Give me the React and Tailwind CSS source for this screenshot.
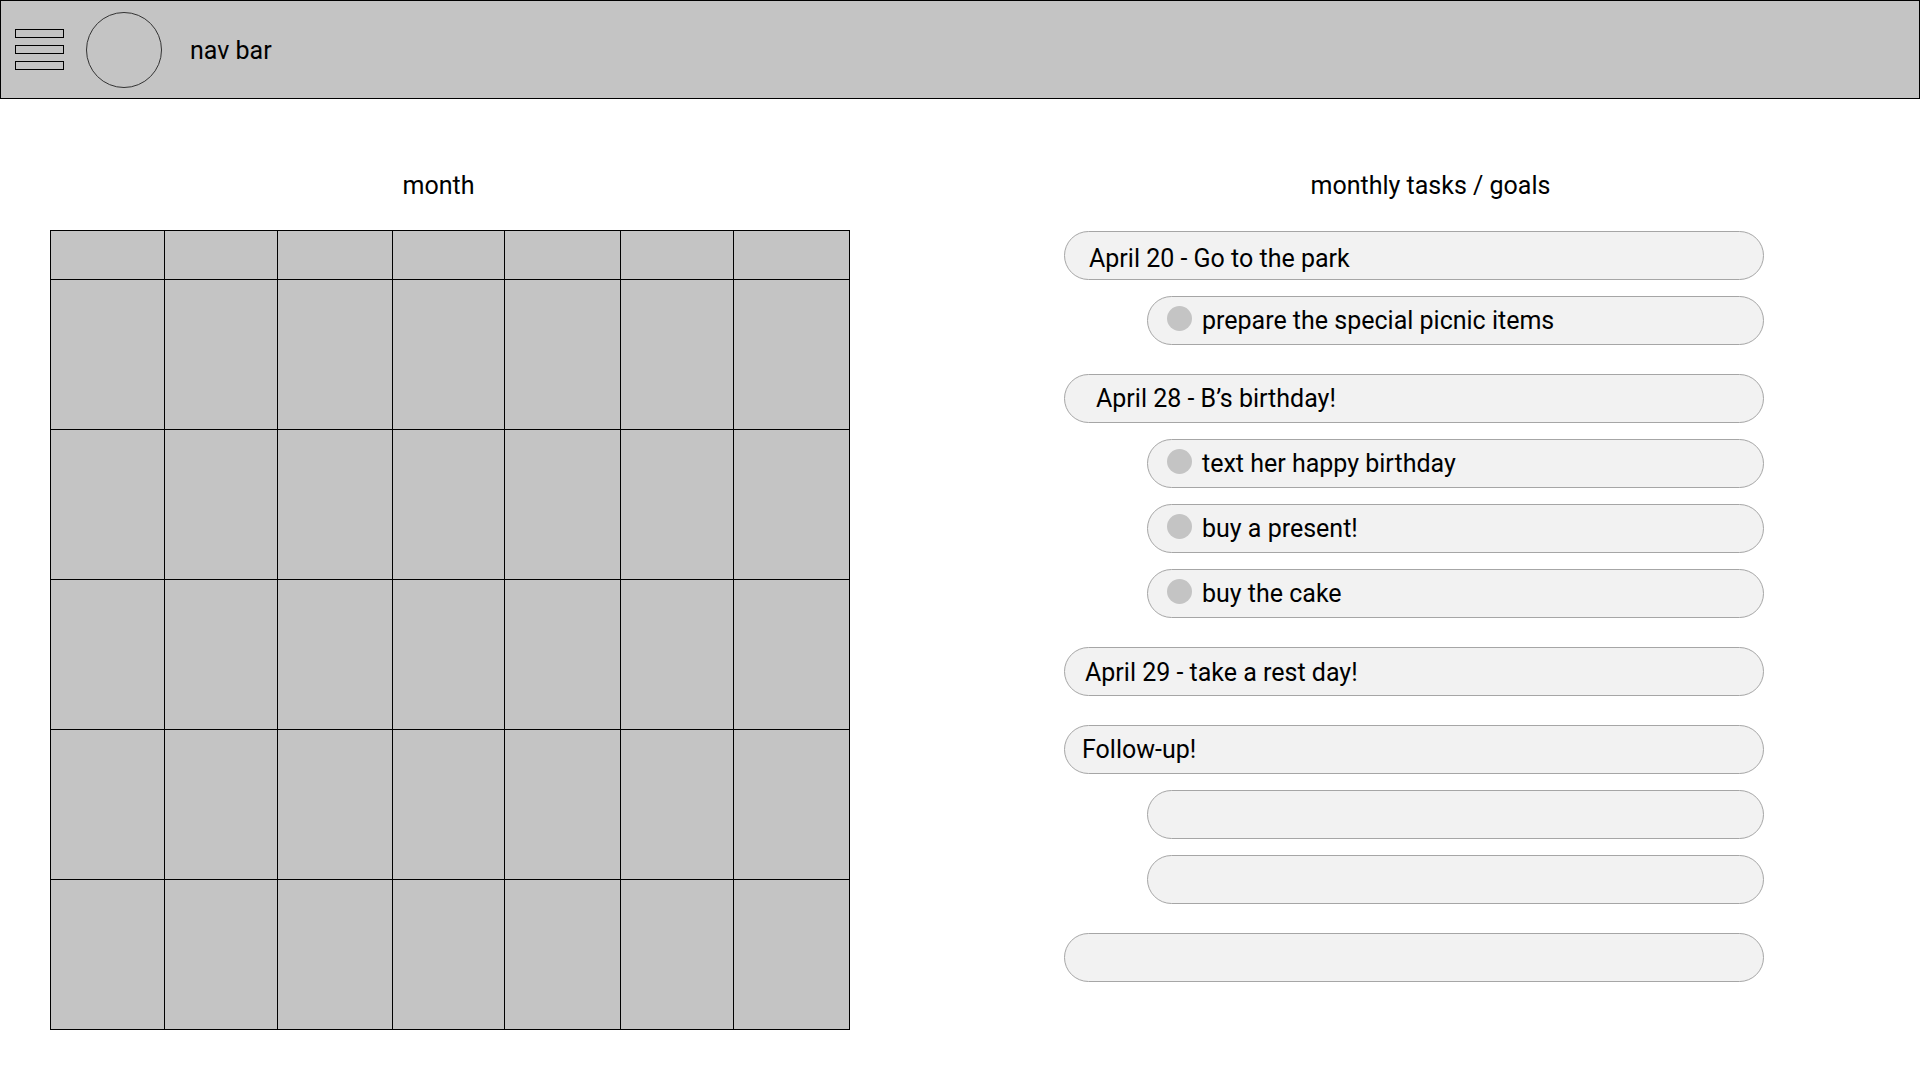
import React from 'react';

const font = { fontFamily: 'Roboto, "Noto Sans", sans-serif' };

const tasks = [
  {
    title: 'April 20 - Go to the park',
    pad: 'pl-[24px] pt-[6px]',
    items: ['prepare the special picnic items'],
  },
  {
    title: 'April 28 - B’s birthday!',
    pad: 'pl-[31px]',
    items: ['text her happy birthday', 'buy a present!', 'buy the cake'],
  },
  {
    title: 'April 29 - take a rest day!',
    pad: 'pl-[20px] pt-[2px]',
    items: [],
  },
  {
    title: 'Follow-up!',
    pad: 'pl-[17px]',
    items: [null, null],
  },
  {
    title: '',
    pad: 'pl-[20px]',
    items: [],
  },
];

const NavBar = () => (
  <header className="h-[99px] w-full bg-[#c4c4c4] border border-black flex items-center pl-[14px]">
    {/* hamburger */}
    <div className="flex flex-col gap-[7px] w-[49px]">
      <div className="h-[9px] border border-black" />
      <div className="h-[9px] border border-black" />
      <div className="h-[9px] border border-black" />
    </div>
    {/* avatar */}
    <div className="ml-[22px] w-[76px] h-[76px] rounded-full border border-[#333]" />
    <span className="ml-[28px] mt-[2px] text-[25px] text-black">nav bar</span>
  </header>
);

const MonthGrid = () => {
  const cols = [0, 1, 2, 3, 4, 5, 6];
  const rows = [0, 1, 2, 3, 4];
  return (
    <div className="w-[800px]">
      <div className="text-[25px] leading-[29px] text-center pr-[23px] text-black">month</div>
      <div className="mt-[30px] w-[800px] grid grid-cols-[114px_113px_115px_112px_116px_113px_116px] border-l border-t border-black bg-[#c4c4c4]">
        {cols.map((c) => (
          <div key={'h' + c} className="h-[49px] border-r border-b border-black" />
        ))}
        {rows.map((r) =>
          cols.map((c) => (
            <div key={r + '-' + c} className="h-[150px] border-r border-b border-black" />
          ))
        )}
      </div>
    </div>
  );
};

const Pill = ({ children, className = '' }) => (
  <div
    className={`h-[49px] rounded-full bg-[#f2f2f2] border border-[#a6a6a6] flex items-center text-[25px] text-black ${className}`}
  >
    {children}
  </div>
);

const TaskList = () => (
  <div className="w-[700px]">
    <div className="text-[25px] leading-[29px] text-center pl-[33px] text-black">monthly tasks / goals</div>
    <div className="mt-[31px] flex flex-col gap-[29px]">
      {tasks.map((t, i) => (
        <div key={i} className="flex flex-col gap-[16px]">
          <Pill className={t.pad}>{t.title}</Pill>
          {t.items.map((item, j) => (
            <Pill key={j} className="ml-[83px] pl-[19px]">
              {item && (
                <>
                  <span className="w-[25px] h-[25px] rounded-full bg-[#c4c4c4] mb-[4px] shrink-0" />
                  <span className="ml-[10px]">{item}</span>
                </>
              )}
            </Pill>
          ))}
        </div>
      ))}
    </div>
  </div>
);

export default function App() {
  return (
    <div className="min-h-screen w-[1920px] bg-white" style={font}>
      <NavBar />
      <main className="flex pt-[72px] pl-[50px]">
        <MonthGrid />
        <div className="ml-[214px]">
          <TaskList />
        </div>
      </main>
    </div>
  );
}
